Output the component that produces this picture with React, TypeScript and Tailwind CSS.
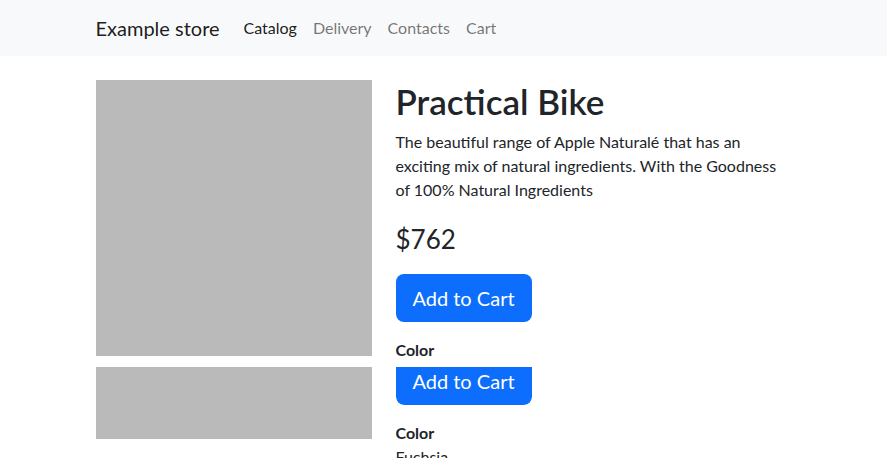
import React from 'react'

const font = { fontFamily: 'Lato, "Noto Sans", sans-serif' }

function NavBar() {
  const links = ['Catalog', 'Delivery', 'Contacts', 'Cart']
  return (
    <nav className="bg-[#f8f9fa]">
      <div className="w-[720px] mx-auto px-3 h-14 flex items-center">
        <a className="text-[20px] leading-[30px] text-[rgba(0,0,0,0.9)] mr-4">Example store</a>
        <ul className="flex">
          {links.map((l, i) => (
            <li key={l}>
              <a className={`block px-2 py-2 text-base ${i === 0 ? 'text-[rgba(0,0,0,0.9)]' : 'text-[rgba(0,0,0,0.55)]'}`}>{l}</a>
            </li>
          ))}
        </ul>
      </div>
    </nav>
  )
}

export default function App() {
  return (
    <div className="min-h-screen bg-white text-[#212529]" style={font}>
      <NavBar />
      <main className="w-[720px] mx-auto mt-6">
        {/* first product */}
        <div className="flex">
          <div className="w-[300px] px-3">
            <div className="h-[276px] bg-[#bababa]" />
          </div>
          <div className="w-[420px] px-3">
            <h1 className="text-[35px] leading-[42px] font-semibold mb-2">Practical Bike</h1>
            <p className="text-base leading-6">
              The beautiful range of Apple Naturalé that has an exciting mix of natural ingredients. With the Goodness of 100% Natural Ingredients
            </p>
            <div className="mt-[22px] text-[26px] leading-[31px]">$762</div>
            <button className="mt-[19px] w-[136px] h-12 rounded-lg bg-[#0d6efd] text-white text-[20px]">Add to Cart</button>
            <div className="mt-4 font-bold leading-6">Color</div>
          </div>
        </div>

        {/* second product, partly hidden */}
        <div className="flex mt-[5px]">
          <div className="w-[300px] px-3">
            <div className="h-[72px] bg-[#bababa]" />
          </div>
          <div className="w-[420px] px-3">
            <div className="w-[136px] h-[38px] overflow-hidden rounded-b-lg">
              <button className="-mt-[10px] w-[136px] h-12 rounded-lg bg-[#0d6efd] text-white text-[20px]">Add to Cart</button>
            </div>
            <div className="mt-4 font-bold leading-6">Color</div>
            <div className="leading-6">Fuchsia</div>
          </div>
        </div>
      </main>
    </div>
  )
}
